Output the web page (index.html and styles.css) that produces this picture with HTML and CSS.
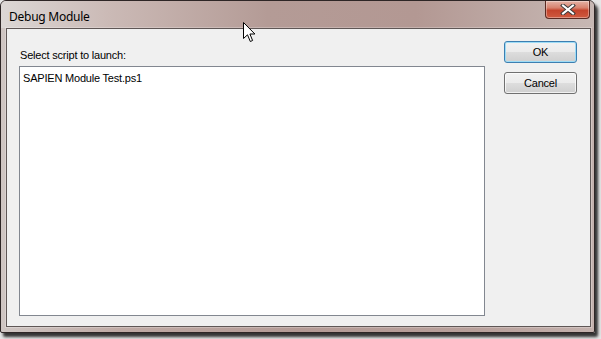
FILE: index.html
```html
<!DOCTYPE html>
<html>
<head>
    <meta charset="utf-8">
    <title>Debug Module</title>
    <link rel="stylesheet" href="styles.css">
</head>
<body>
    <div class="window">
        <div class="titlebar">
            <span class="title">Debug Module</span>
            <div class="close-btn">
                <svg width="16" height="11" viewBox="0 0 16 11">
                    <path d="M3 1.5 L13 9.5 M13 1.5 L3 9.5" stroke="#3a3a3a" stroke-width="4" stroke-linecap="square"/>
                    <path d="M3 1.5 L13 9.5 M13 1.5 L3 9.5" stroke="#ffffff" stroke-width="2" stroke-linecap="square"/>
                </svg>
            </div>
        </div>
        <div class="client">
            <div class="main">
                <label class="prompt" for="scripts">Select script to launch:</label>
                <div class="listbox" id="scripts">
                    <div class="list-item">SAPIEN Module Test.ps1</div>
                </div>
            </div>
            <div class="buttons">
                <button class="btn btn-default">OK</button>
                <button class="btn">Cancel</button>
            </div>
        </div>
    </div>

    <!-- mouse pointer over the title bar -->
    <svg class="cursor" width="13" height="21" viewBox="0 0 13 21">
        <path d="M0.5 0.5 L0.5 16.5 L4.5 12.8 L7.3 19.5 L9.6 18.5 L6.9 12 L11.9 12 Z" fill="#ffffff" stroke="#000000" stroke-width="1" stroke-linejoin="miter"/>
    </svg>
</body>
</html>
```

FILE: styles.css
```css
body {
    margin: 0;
    padding: 0;
    width: 601px;
    height: 339px;
    background-color: #e6e6e6;
    font-family: "Liberation Sans", Arial, sans-serif;
    font-size: 11px;
    letter-spacing: -0.2px;
    color: #000;
    overflow: hidden;
    position: relative;
}
.window {
    width: 595px;
    height: 333px;
    box-sizing: border-box;
    border: 1px solid #2e2626;
    border-radius: 6px 6px 2px 2px;
    padding: 0 3px 5px 5px;
    display: flex;
    flex-direction: column;
    background: linear-gradient(to right, #cfc6c3 0%, #bfaaa5 20%, #b49b96 50%, #b8a09b 80%, #c4b2ae 100%);
    box-shadow: 3px 4px 3px rgba(20, 20, 20, 0.85);
}
.titlebar {
    height: 27px;
    display: flex;
    align-items: flex-start;
    background: linear-gradient(to right, #dcd7d5 0%, #cbbab6 18%, #b49b96 45%, #b39893 70%, #c7b8b4 100%);
    margin: 0 -3px 0 -5px;
    padding: 0 4px 0 8px;
    border-radius: 5px 5px 0 0;
}
.title {
    padding-top: 8px;
    font-family: "Noto Sans", "Liberation Sans", sans-serif;
    font-size: 12px;
    letter-spacing: -0.25px;
    line-height: 15px;
    color: #000;
}
.close-btn {
    margin-left: auto;
    width: 45px;
    height: 18px;
    box-sizing: border-box;
    border: 1px solid #5a2a22;
    border-top: none;
    border-radius: 0 0 4px 4px;
    background: linear-gradient(to bottom, #e4b3a6 0%, #d7826e 40%, #c4442c 55%, #cf5a3f 100%);
    display: flex;
    justify-content: center;
    align-items: center;
    box-shadow: inset 0 0 0 1px rgba(255, 255, 255, 0.35);
}
.client {
    flex: 1;
    display: flex;
    background-color: #f0f0f0;
    border: 1px solid #5f5756;
    box-shadow: 0 0 0 1px rgba(255, 255, 255, 0.25);
}
.main {
    padding: 19px 0 0 12px;
    display: flex;
    flex-direction: column;
}
.prompt {
    line-height: 14px;
    margin-left: 1px;
    margin-bottom: 4px;
}
.listbox {
    width: 466px;
    height: 250px;
    box-sizing: border-box;
    border: 1px solid #828790;
    background-color: #fff;
    padding: 4px 0 0 3px;
}
.list-item {
    line-height: 14px;
}
.buttons {
    margin-left: 19px;
    padding-top: 12px;
    display: flex;
    flex-direction: column;
    gap: 9px;
}
.btn {
    width: 73px;
    height: 22px;
    border: 1px solid #707070;
    border-radius: 3px;
    background: linear-gradient(to bottom, #f2f2f2 0%, #ebebeb 50%, #dddddd 51%, #cfcfcf 100%);
    box-shadow: inset 0 0 0 1px rgba(255, 255, 255, 0.7);
    font-family: "Liberation Sans", Arial, sans-serif;
    font-size: 11px;
    letter-spacing: -0.2px;
    color: #000;
    padding: 0;
    cursor: pointer;
}
.btn-default {
    border-color: #3c7fb1;
    box-shadow: inset 0 0 0 1px #9edcf6;
}
.cursor {
    position: absolute;
    left: 243px;
    top: 22px;
}
```
